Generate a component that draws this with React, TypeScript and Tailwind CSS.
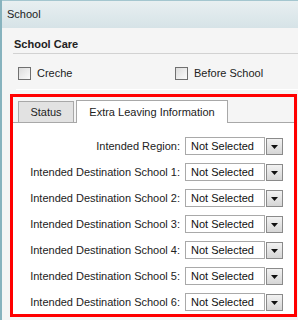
import React from "react";

const ROWS = [
  "Intended Region:",
  "Intended Destination School 1:",
  "Intended Destination School 2:",
  "Intended Destination School 3:",
  "Intended Destination School 4:",
  "Intended Destination School 5:",
  "Intended Destination School 6:",
];

function Checkbox({ label }: { label: string }) {
  return (
    <label className="flex items-center gap-[6px]">
      <span className="block w-[13px] h-[13px] border border-[#707070] bg-gradient-to-br from-[#dcdcdc] to-[#fbfbfb]" />
      <span className="text-[11px] leading-[13px] text-[#222]">{label}</span>
    </label>
  );
}

function SelectBox() {
  return (
    <div className="flex items-center gap-[1px]">
      <div className="w-[80px] h-[18px] border border-[#a9a9a9] bg-white pl-[5px] flex items-center text-[11px] text-[#111]">
        Not Selected
      </div>
      <div className="w-[17px] h-[17px] border border-[#8a8a8a] bg-gradient-to-b from-[#f2f2f2] to-[#d6d6d6] flex items-center justify-center">
        <svg width="7" height="4" viewBox="0 0 7 4" className="mt-[1px]">
          <path d="M0 0H7L3.5 4Z" fill="#111" />
        </svg>
      </div>
    </div>
  );
}

export default function App() {
  return (
    <div
      className="w-[298px] h-[320px] overflow-hidden bg-[#f5f5f5] border-l-2 border-[#87b3be] text-[#222]"
      style={{ fontFamily: '"Liberation Sans", Arial, sans-serif' }}
    >
      {/* Header */}
      <div className="h-[28px] border-t border-[#a4c6cf] bg-gradient-to-b from-[#e8eff1] to-[#d6e3e7] pl-[5px] flex items-center text-[11px]">
        School
      </div>

      {/* School Care */}
      <div className="ml-[11px] pt-[10px] pb-[2px] border-b border-[#d2d2d2]">
        <div className="pl-[1px] text-[11px] leading-[13px] font-bold text-[#222]">School Care</div>
      </div>

      <div className="mt-[13px] pl-[16px] flex">
        <div className="w-[157px]">
          <Checkbox label="Creche" />
        </div>
        <Checkbox label="Before School" />
      </div>

      <div className="mt-[9px] ml-[14px] h-px bg-white" />

      {/* Highlighted tab panel */}
      <div className="mt-[4px] ml-[8px] w-[287px] h-[223px] border-[3px] border-[#ff0000] flex flex-col">
        <div className="pt-[3px] pl-[5px] flex items-end gap-[2px] border-b border-[#a8a8a8]">
          <div className="w-[56px] h-[21px] border border-b-0 border-[#a8a8a8] bg-[#e2e2e2] flex items-center justify-center text-[11px]">
            Status
          </div>
          <div className="w-[152px] h-[23px] -mb-px border border-b-0 border-[#a8a8a8] bg-white flex items-center justify-center text-[11px]">
            Extra Leaving Information
          </div>
        </div>

        <div className="flex-1 bg-white pt-[14px] pr-[11px] flex flex-col gap-[8px]">
          {ROWS.map((label) => (
            <div key={label} className="flex items-center justify-end gap-[5px]">
              <span className="text-[11px] text-[#222]">{label}</span>
              <SelectBox />
            </div>
          ))}
        </div>
      </div>
    </div>
  );
}
